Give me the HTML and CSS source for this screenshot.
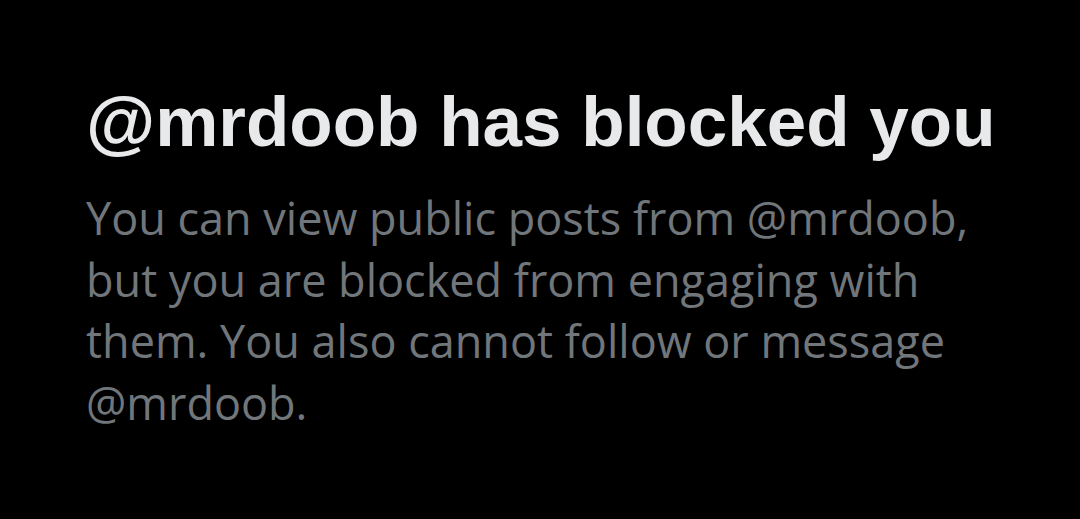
FILE: index.html
```html
<!DOCTYPE html>
<html>
<head>
<meta charset="utf-8">
<link rel="stylesheet" href="styles.css">
</head>
<body>
<main class="notice">
  <h1 class="title">@mrdoob has blocked you</h1>
  <p class="body">You can view public posts from @mrdoob, but you are blocked from engaging with them. You also cannot follow or message @mrdoob.</p>
</main>
</body>
</html>
```

FILE: styles.css
```css
html, body {
  margin: 0;
  padding: 0;
  background: #000;
  width: 1080px;
  height: 519px;
  overflow: hidden;
}
.notice {
  padding: 82px 0 0 86px;
  width: 900px;
  display: flex;
  flex-direction: column;
}
.title {
  margin: 0;
  font-family: "Liberation Sans", Arial, sans-serif;
  font-weight: 700;
  font-size: 71px;
  line-height: 80px;
  color: #e7e9ea;
  white-space: nowrap;
}
.body {
  margin: 25px 0 0 0;
  font-family: "Open Sans", sans-serif;
  font-size: 45px;
  line-height: 61.5px;
  color: #71767b;
}
```
